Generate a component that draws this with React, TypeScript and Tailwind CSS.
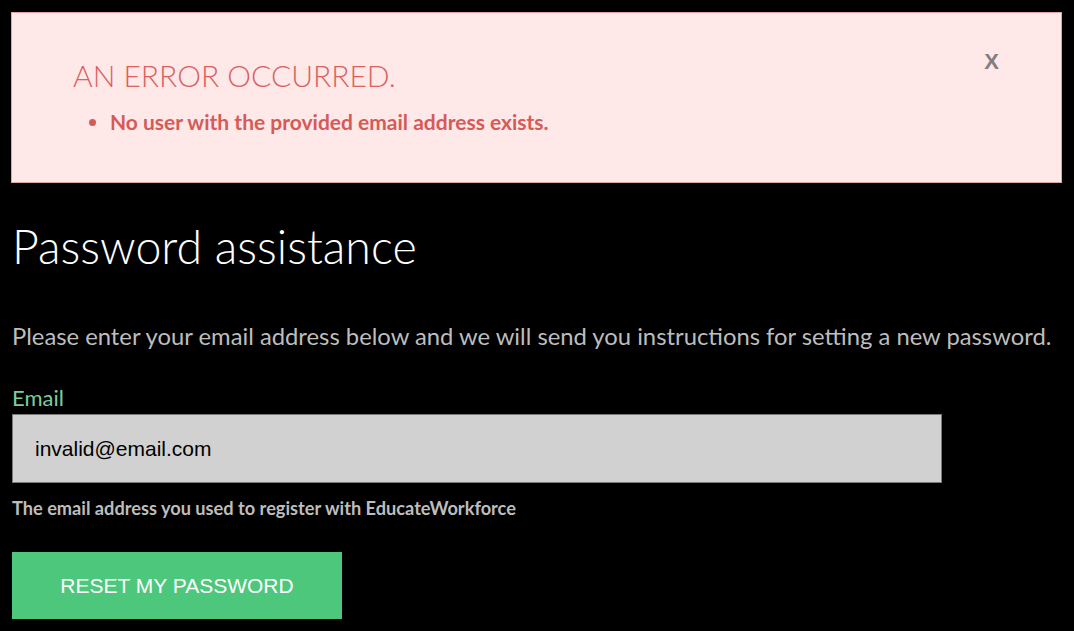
import React from "react";

export default function App() {
  return (
    <div className="min-h-[631px] w-full bg-black pt-3 pl-[11px] pr-3" style={{ fontFamily: "Lato, 'Open Sans', sans-serif" }}>
      <div className="relative h-[171px] border border-[#e4a3a3] bg-[#ffe8e8] pl-[61px] pt-[45px]">
        <h2 className="text-[30px] font-light leading-[34px] text-[#d9625f]">AN ERROR OCCURRED.</h2>
        <ul className="mt-[18px] list-disc pl-[37px] text-[#d65a57] marker:text-[#d65a57]">
          <li className="text-[21px] font-bold leading-[24px]">No user with the provided email address exists.</li>
        </ul>
        <button className="absolute right-[62px] top-[32px] text-[22px] font-bold leading-[34px] text-[#808080]" style={{ fontFamily: "'Liberation Sans', Arial, sans-serif" }}>X</button>
      </div>
      <h1 className="mt-[35px] pl-px text-[46.5px] font-light leading-[56px] text-white">Password assistance</h1>
      <p className="mt-[48px] pl-px text-[23.8px] leading-[28px] text-[#bdbdbd]">Please enter your email address below and we will send you instructions for setting a new password.</p>
      <label className="mt-[36px] mb-[4px] block pl-px text-[22px] leading-[24px] text-[#7ccc9c]">Email</label>
      <div className="ml-px flex h-[69px] w-[930px] items-center border border-[#7a7a7a] bg-[#d1d1d1] pl-[22px]">
        <span className="text-[21px] text-black" style={{ fontFamily: "'Liberation Sans', Arial, sans-serif" }}>invalid@email.com</span>
      </div>
      <p className="mt-[14px] pl-px text-[18.2px] font-bold leading-[22px] text-[#bdbdbd]">The email address you used to register with EducateWorkforce</p>
      <button className="ml-px mt-[33px] flex h-[67px] w-[330px] items-center justify-center bg-[#4cc77c] text-[21px] text-white" style={{ fontFamily: "'Liberation Sans', Arial, sans-serif" }}>RESET MY PASSWORD</button>
    </div>
  );
}
